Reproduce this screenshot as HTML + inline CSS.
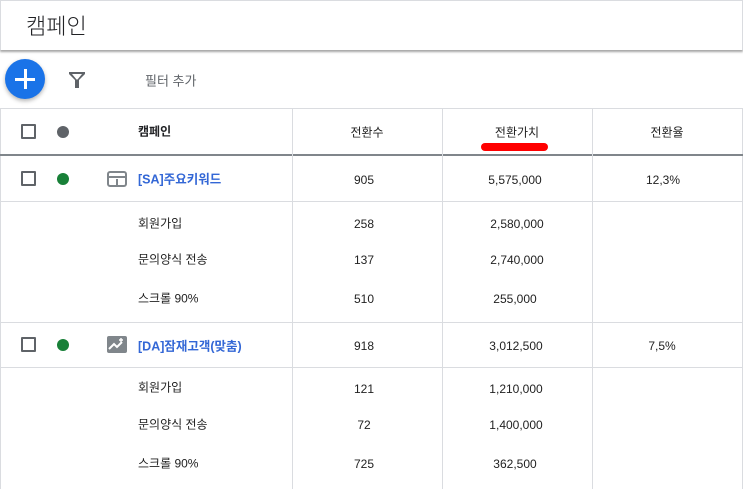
<!DOCTYPE html>
<html><head><meta charset="utf-8"><style>
*{margin:0;padding:0;box-sizing:border-box}
body{width:743px;height:489px;overflow:hidden;background:#fff;font-family:"Liberation Sans","Noto Sans CJK KR",sans-serif;position:relative;color:#222}
.a{position:absolute}
.t{position:absolute;font-size:12px;white-space:nowrap;transform:translate(-50%,-50%)}
.l{position:absolute;font-size:12px;white-space:nowrap;transform:translateY(-50%)}
.h{position:absolute;left:0;width:743px;height:1px;background:#dadce0}
.v{position:absolute;width:1px;background:#dadce0}
.cb{position:absolute;width:15px;height:15px;border:2px solid #5f6368;border-radius:1px}
.dot{position:absolute;width:12px;height:12px;border-radius:50%}
.link{color:#3367d6;font-weight:bold;font-size:12.5px}
</style></head><body>
<div class="a" style="left:0;top:0;width:743px;height:50px;border:1px solid #dadce0;border-bottom:none;box-shadow:0 2px 2px rgba(0,0,0,.35)"></div>
<div class="l" style="left:26px;top:25px;font-size:22px;color:#202124;font-weight:300">캠페인</div>
<div class="a" style="left:5px;top:59px;width:40px;height:40px;border-radius:50%;background:#1a73e8;box-shadow:0 2px 4px rgba(0,0,0,.3)"></div>
<div class="a" style="left:24px;top:69px;width:3px;height:20px;background:#fff"></div>
<div class="a" style="left:15px;top:78px;width:20px;height:3px;background:#fff"></div>
<svg class="a" style="left:68px;top:71px" width="18" height="18" viewBox="0 0 18 18"><path d="M1 1h16v2l-6 6v8h-4v-8l-6-6z" fill="#5f6368"/><path d="M4 3h10l-4.5 5.5h-1z" fill="#fff"/></svg>
<div class="l" style="left:145px;top:80px;font-size:13px;color:#5f6368">필터 추가</div>
<div class="a" style="left:0;top:108px;width:1px;height:381px;background:#dadce0"></div>
<div class="a" style="left:742px;top:108px;width:1px;height:381px;background:#dadce0"></div>
<div class="h" style="top:108px"></div>
<div class="a" style="left:0;top:154px;width:743px;height:2px;background:#80868b"></div>
<div class="h" style="top:201px"></div>
<div class="h" style="top:322px"></div>
<div class="h" style="top:367px"></div>
<div class="v" style="left:292px;top:108px;height:381px"></div>
<div class="v" style="left:442px;top:108px;height:381px"></div>
<div class="v" style="left:592px;top:108px;height:381px"></div>
<div class="cb" style="left:21px;top:124px"></div>
<div class="dot" style="left:57px;top:126px;background:#5f6368"></div>
<div class="l" style="left:138px;top:131px;font-weight:bold;color:#202124">캠페인</div>
<div class="t" style="left:367px;top:132px">전환수</div>
<div class="t" style="left:517px;top:132px">전환가치</div>
<div class="a" style="left:481px;top:143px;width:67px;height:8px;border-radius:4px;background:#f00"></div>
<div class="t" style="left:667px;top:132px">전환율</div>
<div class="cb" style="left:21px;top:171px"></div>
<div class="dot" style="left:57px;top:173px;background:#188038"></div>
<svg class="a" style="left:107px;top:171px" width="20" height="16" viewBox="0 0 20 16"><rect x="1" y="1" width="18" height="14" rx="2" fill="none" stroke="#80868b" stroke-width="2"/><path d="M1 6h18M10 8v7" stroke="#80868b" stroke-width="2"/></svg>
<div class="l link" style="left:138px;top:178px">[SA]주요키워드</div>
<div class="t" style="left:364px;top:180px">905</div>
<div class="t" style="left:515px;top:180px">5,575,000</div>
<div class="t" style="left:663px;top:180px">12,3%</div>
<div class="l" style="left:138px;top:223px">회원가입</div>
<div class="t" style="left:364px;top:224px">258</div>
<div class="t" style="left:517px;top:224px">2,580,000</div>
<div class="l" style="left:138px;top:259px">문의양식 전송</div>
<div class="t" style="left:364px;top:260px">137</div>
<div class="t" style="left:517px;top:260px">2,740,000</div>
<div class="l" style="left:138px;top:298px">스크롤 90%</div>
<div class="t" style="left:364px;top:299px">510</div>
<div class="t" style="left:515px;top:299px">255,000</div>
<div class="cb" style="left:21px;top:337px"></div>
<div class="dot" style="left:57px;top:339px;background:#188038"></div>
<svg class="a" style="left:107px;top:336px" width="20" height="17" viewBox="0 0 20 17"><rect x="0" y="0" width="20" height="17" rx="2" fill="#80868b"/><path d="M2 13l5-5 3 3 5-5" fill="none" stroke="#fff" stroke-width="2"/><path d="M14 2v4M12 4h4" stroke="#fff" stroke-width="1.4"/></svg>
<div class="l link" style="left:138px;top:345px">[DA]잠재고객(맞춤)</div>
<div class="t" style="left:364px;top:346px">918</div>
<div class="t" style="left:516px;top:346px">3,012,500</div>
<div class="t" style="left:662px;top:346px">7,5%</div>
<div class="l" style="left:138px;top:387px">회원가입</div>
<div class="t" style="left:364px;top:389px">121</div>
<div class="t" style="left:516px;top:389px">1,210,000</div>
<div class="l" style="left:138px;top:424px">문의양식 전송</div>
<div class="t" style="left:364px;top:425px">72</div>
<div class="t" style="left:516px;top:425px">1,400,000</div>
<div class="l" style="left:138px;top:463px">스크롤 90%</div>
<div class="t" style="left:364px;top:464px">725</div>
<div class="t" style="left:515px;top:464px">362,500</div>
</body></html>
